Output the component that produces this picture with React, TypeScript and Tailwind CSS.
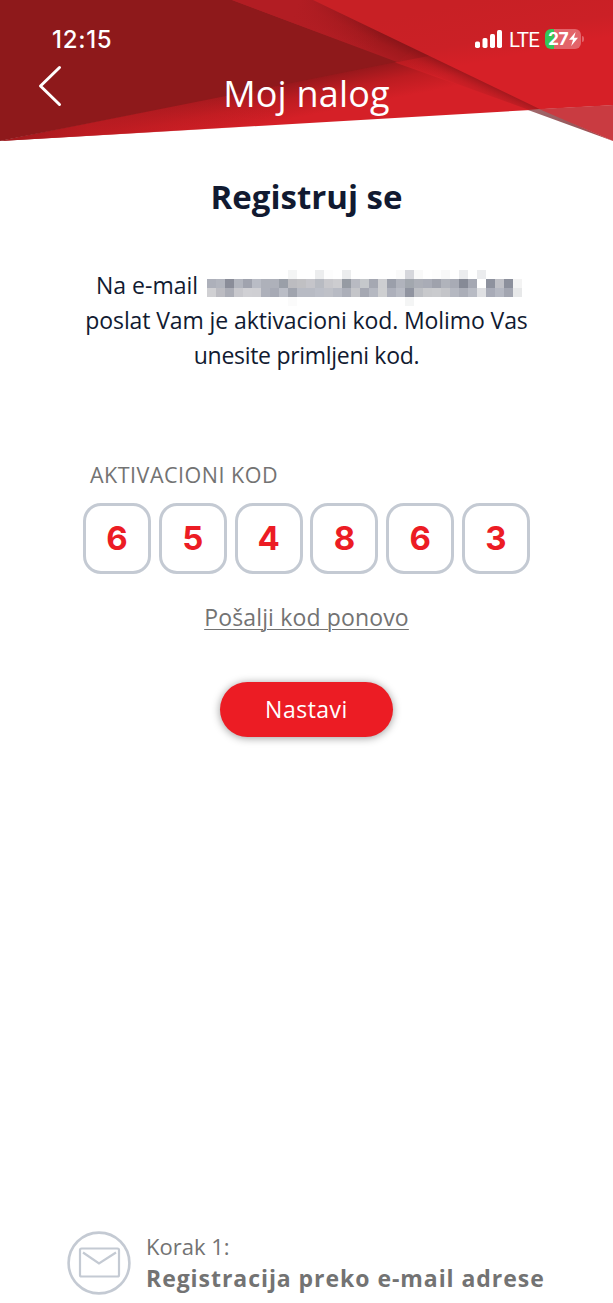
import React from 'react';

const codeDigits = ['6', '5', '4', '8', '6', '3'];

// Shades of the masked e-mail address, one string per row of blocks
const maskRows = [
  'fff fff fff fff fff fff fff fff fff f4f5f5 fff fff ecedee fdfdfd fff ecedee fff fff fff fff fff fafafa d6d7dc f9f9f9 fff fdfdfd f8f8f8 fff ebecee fff ebecee fff fff fff fff',
  'adb0ba b2b5be 8a8d99 b2b5be a0a3ae b9bcc5 aeb1ba aeb1ba 9a9fa8 bcbcc0 c0c0c3 c5c5ca b8bbc2 c8c8cc cdcdd0 969ba3 b8bac2 c5c8cb a5a8b2 cdced1 9b9faa b0b3bc a2a7ae acafb7 a9acb6 9fa2ac b0b3bb a8abb5 868a96 a5a8b3 fff 8e929e c0c1c7 8c909c f3f3f3',
  'd0d0d3 bcbcc2 abadb6 c8c8cd d0d0d4 cfcfd3 aeb1bb a7aab5 babdc6 a0a4ae b8bbc4 b8bbc4 bcbfc8 bfc1c8 b8bbc4 acafb9 c4c5c9 a5a8b2 b5b8c1 cecfd1 adb0bb b8bbc4 9094a0 bdbfc4 c8c9cc cacbce c4c5c9 b5b8c1 abaeb8 b8bbc4 dfe0e3 a8abb7 b5b8c2 a3a6b1 e7e8e9',
  'fff fff fff fff fff fff fff fff fff fbfbfb fff fff fff fff fff fff fff fff fff fff fff fff f4f5f5 fff fff fff fff fff fff fff fff fff fff fff fff',
].map((row) => row.split(' '));

const HeaderArt = () => (
  <svg className="absolute inset-0" width="613" height="142" viewBox="0 0 613 142">
    <defs>
      <linearGradient id="fold" gradientUnits="userSpaceOnUse" x1="300" y1="81" x2="307" y2="116">
        <stop offset="0" stopColor="#98181c" />
        <stop offset="0.45" stopColor="#bd1c21" />
        <stop offset="1" stopColor="#d52027" />
      </linearGradient>
      <linearGradient id="foldLeft" gradientUnits="userSpaceOnUse" x1="0" y1="0" x2="290" y2="0">
        <stop offset="0" stopColor="#a0181c" />
        <stop offset="0.3" stopColor="#c01c22" stopOpacity="0.8" />
        <stop offset="1" stopColor="#d52027" stopOpacity="0" />
      </linearGradient>
      <linearGradient id="band" gradientUnits="userSpaceOnUse" x1="370" y1="27" x2="358" y2="52">
        <stop offset="0" stopColor="#8a1519" />
        <stop offset="0.35" stopColor="#a0191d" />
        <stop offset="1" stopColor="#b21d23" />
      </linearGradient>
      <linearGradient id="bandTop" gradientUnits="userSpaceOnUse" x1="300" y1="0" x2="380" y2="40">
        <stop offset="0" stopColor="#b21d23" />
        <stop offset="1" stopColor="#b21d23" stopOpacity="0" />
      </linearGradient>
      <linearGradient id="overlap" gradientUnits="userSpaceOnUse" x1="412" y1="57" x2="417" y2="82">
        <stop offset="0" stopColor="#bb1b20" />
        <stop offset="1" stopColor="#d32027" />
      </linearGradient>
      <linearGradient id="shade" gradientUnits="userSpaceOnUse" x1="440" y1="60.5" x2="431" y2="80">
        <stop offset="0" stopColor="#8c1519" stopOpacity="0.8" />
        <stop offset="0.45" stopColor="#a8191e" stopOpacity="0.35" />
        <stop offset="1" stopColor="#c41d23" stopOpacity="0" />
      </linearGradient>
      <linearGradient id="right" gradientUnits="userSpaceOnUse" x1="480" y1="0" x2="497" y2="86">
        <stop offset="0" stopColor="#c82025" />
        <stop offset="0.45" stopColor="#cb2026" />
        <stop offset="0.7" stopColor="#d62027" />
      </linearGradient>
      <linearGradient id="tip" gradientUnits="userSpaceOnUse" x1="530" y1="108" x2="613" y2="141">
        <stop offset="0" stopColor="#a1686b" />
        <stop offset="0.5" stopColor="#98595c" />
        <stop offset="1" stopColor="#a84a4e" />
      </linearGradient>
    </defs>
    <path d="M0 141L397 60L430 53L545 109.2Z" fill="url(#fold)" />
    <path d="M0 141L290 80L290 124.3Z" fill="url(#foldLeft)" />
    <path d="M0 0H240L399 61.6L0 141Z" fill="#8e191b" />
    <path d="M232 0H322L434 57L397 62Z" fill="url(#band)" />
    <path d="M232 0H322L434 57L397 62Z" fill="url(#bandTop)" />
    <path d="M395 62.4L434 55L545 109.2L529 110Z" fill="url(#overlap)" />
    <path d="M416 48L545 109L529 110L397 62Z" fill="url(#shade)" />
    <path d="M313 0H613V105.2L540 109.2Z" fill="url(#right)" />
    <path d="M528 110L542 109L613 141Z" fill="url(#tip)" />
    <path d="M539 109L613 105V141Z" fill="#c93b41" />
  </svg>
);

const StatusBar = () => (
  <div className="flex h-[78px] items-center justify-between pl-[52px] pr-[29px] text-white">
    <span className="pt-px font-['Inter'] text-[24px] font-medium tracking-[0.7px]">12:15</span>
    <div className="flex items-center">
      <svg width="28" height="18" viewBox="0 0 28 18" fill="white">
        <rect x="0" y="11.5" width="5" height="6.5" rx="1.7" />
        <rect x="7.5" y="8" width="5" height="10" rx="1.7" />
        <rect x="15" y="4" width="5" height="14" rx="1.7" />
        <rect x="22" y="0" width="5" height="18" rx="1.7" />
      </svg>
      <span className="ml-[6px] w-[30px] pt-[2px] font-['Roboto'] text-[20.5px] leading-5 tracking-[-0.6px]">LTE</span>
      <div className="ml-[6px] flex h-5 w-9 items-center justify-center rounded-[6px] bg-[linear-gradient(90deg,#34c759_26%,#e2646a_26%)]">
        <span className="font-['Inter'] text-[17.5px] font-bold leading-5 tracking-[-0.7px]">27</span>
        <svg className="ml-[1px]" width="9" height="14" viewBox="0 0 9 14" fill="white">
          <path d="M6.6 0 0 7.8h4L2.2 14 9 5.8H5Z" />
        </svg>
      </div>
      <span className="ml-[1px] h-[6px] w-[2px] rounded-r-full bg-[#e2646a]" />
    </div>
  </div>
);

const MaskedEmail = () => (
  <span className="grid h-9 w-[315px] grid-cols-[repeat(35,9px)] grid-rows-[repeat(4,9px)]">
    {maskRows.flat().map((shade, i) => (
      <span key={i} style={{ backgroundColor: `#${shade}` }} />
    ))}
  </span>
);

export default function App() {
  return (
    <div className="flex h-[1303px] w-[613px] flex-col overflow-hidden bg-white font-['Open_Sans',sans-serif] text-[#111a31]">
      <header className="relative h-[142px] shrink-0">
        <HeaderArt />
        <div className="relative">
          <StatusBar />
          <div className="grid h-8 grid-cols-[1fr_auto_1fr] items-center text-white">
            <button className="ml-[37px] -mt-[16px] w-[26px]" aria-label="Nazad">
              <svg width="26" height="42" viewBox="0 0 26 42" fill="none" stroke="white" strokeWidth="3" strokeLinecap="round" strokeLinejoin="round">
                <path d="M22.5 2.5 3.5 21l19 18.5" />
              </svg>
            </button>
            <h1 className="text-[36px] leading-8 tracking-[0.2px]">Moj nalog</h1>
          </div>
        </div>
      </header>

      <main className="flex flex-1 flex-col items-center">
        <h2 className="mt-[35px] text-[33px] font-bold leading-10">Registruj se</h2>

        <div className="mt-[53px] flex flex-col items-center text-[23px] leading-[35px]">
          <p className="flex h-[33px] items-start pl-[5px]">
            <span className="mr-[5px] w-[106px] whitespace-nowrap leading-[31px]">Na e-mail</span>
            <MaskedEmail />
          </p>
          <p className="whitespace-nowrap tracking-[-0.1px]">poslat Vam je aktivacioni kod. Molimo Vas</p>
          <p className="whitespace-nowrap tracking-[-0.3px]">unesite primljeni kod.</p>
        </div>

        <div className="mt-[86px] w-[447px]">
          <label className="block pl-[7px] text-[21.5px] leading-8 tracking-[0.5px] text-[#737373]">AKTIVACIONI KOD</label>
          <div className="mt-[12px] flex justify-between">
            {codeDigits.map((digit, i) => (
              <div
                key={i}
                className="flex h-[71px] w-[68px] items-center justify-center rounded-[18px] border-[3px] border-[#c4cad3] font-['Inter'] text-[33px] font-bold text-[#ec1c24]"
              >
                {digit}
              </div>
            ))}
          </div>
        </div>

        <a className="mt-[27px] text-[23px] leading-8 tracking-[0.15px] text-[#737373] underline decoration-1 underline-offset-[3px]">Pošalji kod ponovo</a>

        <button className="mt-[49px] h-[55px] w-[173px] rounded-full bg-[#ec1c24] text-[23px] tracking-[0.5px] text-white shadow-[0_1px_8px_rgba(0,0,0,0.4)]">
          Nastavi
        </button>
      </main>

      <footer className="flex h-[72px] items-start pl-[67px] text-[#737373]">
        <svg width="64" height="64" viewBox="0 0 64 64" fill="none" stroke="#c4cad3">
          <circle cx="32" cy="32" r="30.4" strokeWidth="2.6" />
          <rect x="13" y="17.5" width="39" height="28" rx="1.5" strokeWidth="2.2" />
          <path d="M16 21.5 32 32.5l17-11" strokeWidth="2.2" />
        </svg>
        <div className="ml-[15px]">
          <p className="-mt-px text-[22px] leading-8">Korak 1:</p>
          <p className="mt-px whitespace-nowrap text-[23px] font-bold leading-[30px] tracking-[0.95px]">Registracija preko e-mail adrese</p>
        </div>
      </footer>
    </div>
  );
}
